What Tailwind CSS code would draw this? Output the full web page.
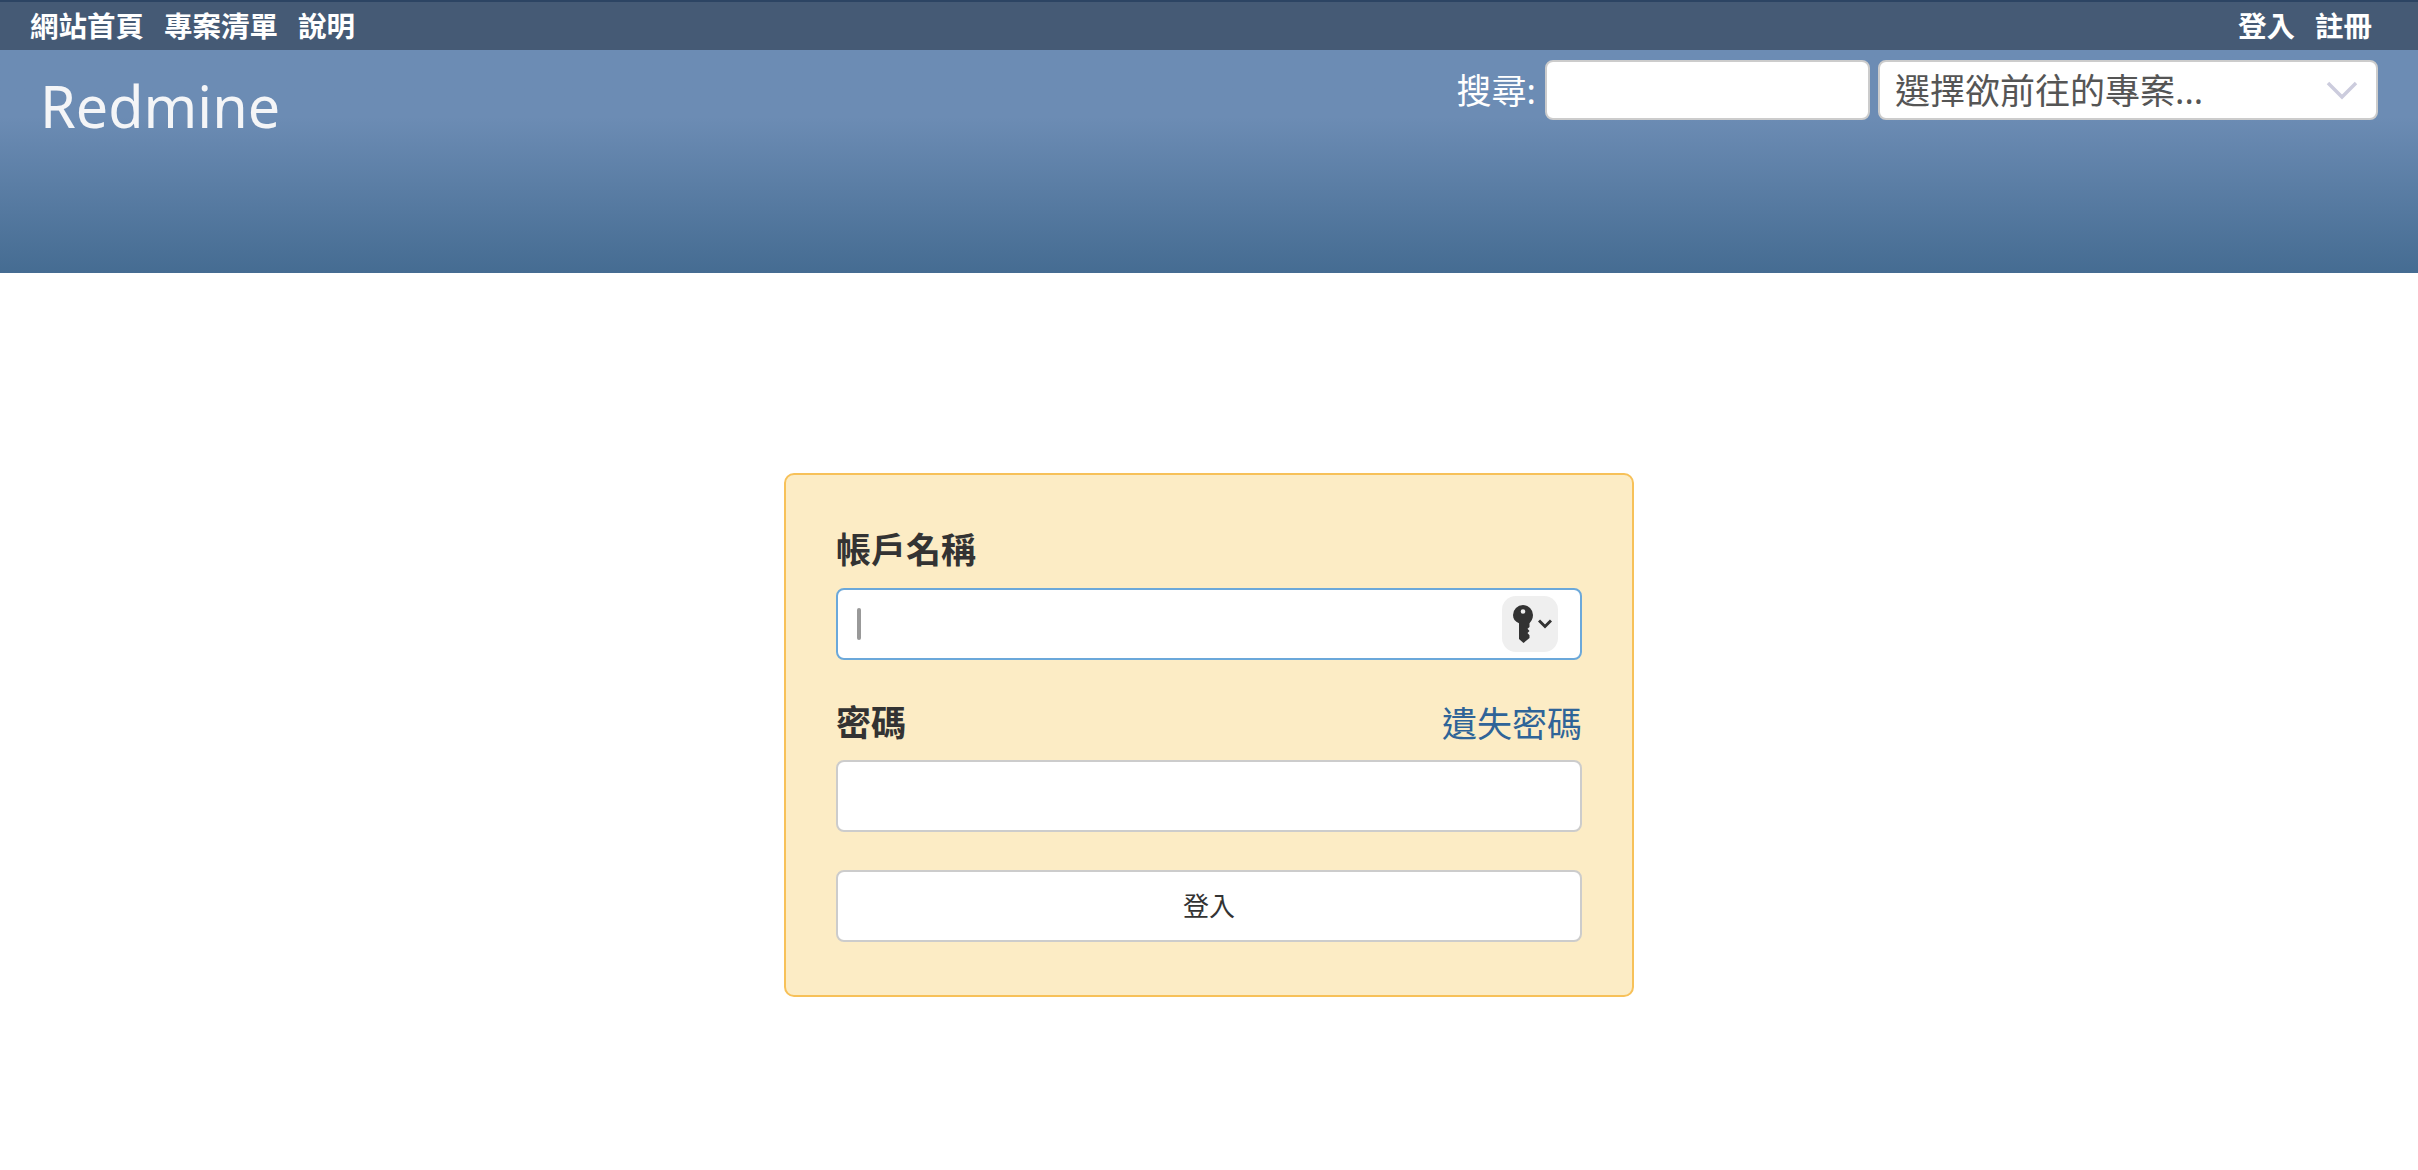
<!DOCTYPE html>
<html lang="zh-Hant">
<head>
    <meta charset="UTF-8">
    <meta name="viewport" content="width=device-width, initial-scale=1.0">
    <title>Redmine</title>
    <script src="https://cdn.jsdelivr.net/npm/@tailwindcss/browser@4"></script>
</head>
<body class="bg-white h-[1170px] overflow-hidden font-['Noto_Sans','Noto_Sans_CJK_TC',sans-serif]">

    <!-- top menu -->
    <div class="h-[50px] bg-[#455a75] border-t-2 border-[#2c4463] flex items-center justify-between pl-[30px] pr-[46px] text-white text-[28.500px] font-bold leading-none">
        <nav class="flex gap-[20px]">
            <a href="#">網站首頁</a>
            <a href="#">專案清單</a>
            <a href="#">說明</a>
        </nav>
        <nav class="flex gap-[20px]">
            <a href="#">登入</a>
            <a href="#">註冊</a>
        </nav>
    </div>

    <!-- header -->
    <header class="h-[223px] bg-gradient-to-b from-[#6c8cb4] from-30% to-[#456c92] flex justify-between items-start pl-[40px] pr-[40px]">
        <h1 class="text-[57.500px] leading-none font-normal text-[#f4f5f7] mt-[28px]">Redmine</h1>
        <div class="flex items-center mt-[10px] text-[35px] leading-none">
            <label class="text-white mr-[9px]">搜尋:</label>
            <input type="text" class="w-[325px] h-[60px] bg-white border-2 border-[#cccccc] rounded-[8px] mr-[8px]">
            <div class="w-[500px] h-[60px] bg-white border-2 border-[#cccccc] rounded-[8px] flex items-center justify-between pl-[15px] pr-[18px] text-[#555555]">
                <span>選擇欲前往的專案...</span>
                <svg width="32" height="20" viewBox="0 0 32 20" fill="none" stroke="#ccccdd" stroke-width="3.5"><path d="M2 3l14 14L30 3"/></svg>
            </div>
        </div>
    </header>

    <!-- login box -->
    <main class="flex justify-center pt-[200px]">
        <form class="w-[850px] h-[524px] bg-[#fcecc5] border-2 border-[#f7c159] rounded-[10px] px-[50px] pt-[57px] text-[#333333]">
            <label class="block text-[35px] font-bold leading-none h-[56px]">帳戶名稱</label>
            <div class="h-[72px] bg-white border-2 border-[#6ba8da] rounded-[8px] flex items-center justify-between pl-[19px] pr-[22px]">
                <span class="w-[4px] h-[32px] bg-[#999999] rounded-[2px]"></span>
                <span class="w-[56px] h-[56px] bg-[#efefef] rounded-[14px] flex items-center justify-start pl-[11px] gap-[5px]">
                    <svg width="20" height="38" viewBox="0 0 20 38" fill="#333333"><path fill-rule="evenodd" d="M10 0a10 10 0 0 1 10 10c0 4-2 6.500-3.500 8.300V22l-2 1.800 2 2.200-2 2 2 2.200V33l-6 5-4.500-4V18.300C2 16.500 0 14 0 10A10 10 0 0 1 10 0zm0 4.200a2.300 2.300 0 1 0 0 4.600 2.300 2.300 0 0 0 0-4.600z"/></svg>
                    <svg width="14" height="10" viewBox="0 0 14 10" fill="none" stroke="#333333" stroke-width="3"><path d="M1 1.500l6 6 6-6"/></svg>
                </span>
            </div>
            <div class="flex justify-between items-start mt-[46px] h-[54px] text-[35px] leading-none">
                <label class="font-bold -mt-[1px]">密碼</label>
                <a href="#" class="text-[#2f6498]">遺失密碼</a>
            </div>
            <input type="password" class="block w-full h-[72px] bg-white border-2 border-[#cccccc] rounded-[8px]">
            <button type="button" class="block w-full h-[72px] mt-[38px] bg-white border-2 border-[#cccccc] rounded-[8px] text-[26px] text-[#333333]">登入</button>
        </form>
    </main>

</body>
</html>
